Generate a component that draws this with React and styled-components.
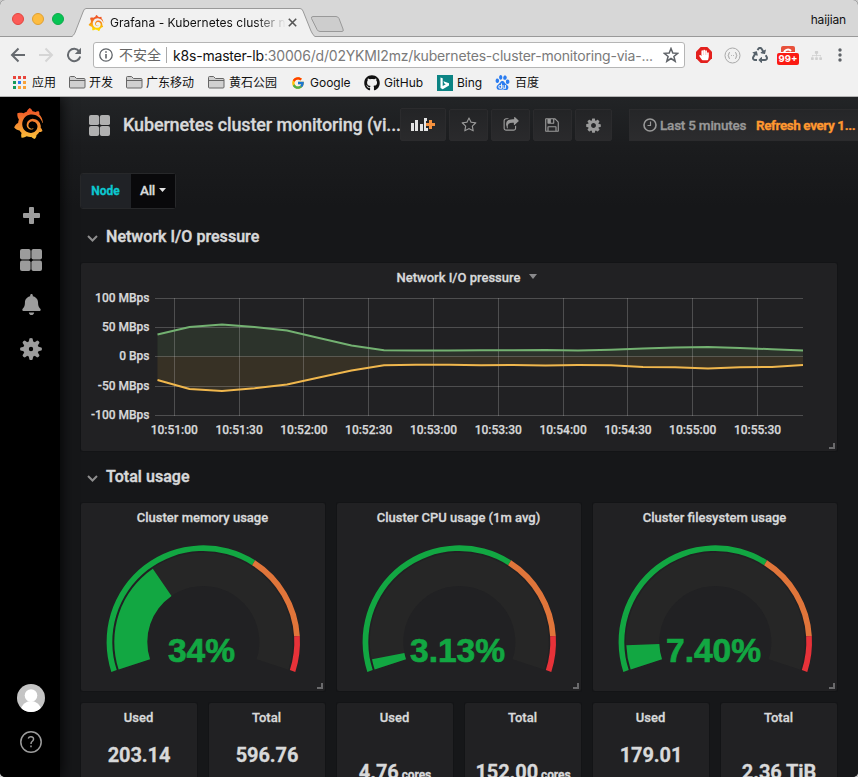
import React from "react";
import styled, { createGlobalStyle } from "styled-components";
import { FaGithub, FaRecycle, FaBell, FaHandPaper, FaSitemap } from "react-icons/fa";
import { SiGrafana, SiBaidu } from "react-icons/si";
import { FcGoogle } from "react-icons/fc";

const UI = `Inter, "Noto Sans CJK SC", sans-serif`;
const DASH = `Roboto, "Liberation Sans", sans-serif`;

const GlobalStyle = createGlobalStyle`
  * { box-sizing: border-box; }
  body { margin: 0; background: #c9c9c9; }
  svg { display: block; flex: none; }
`;

const Window = styled.div`
  width: 858px;
  height: 777px;
  display: flex;
  flex-direction: column;
  overflow: hidden;
  border-radius: 5px;
  background: #161719;
  font-family: ${UI};
`;

/* ---------- browser chrome ---------- */

const TabStrip = styled.div`
  height: 37px;
  flex: none;
  display: flex;
  align-items: flex-start;
  background: #d7d7d7;
  border-bottom: 1px solid #999;
`;
const Lights = styled.div`
  display: flex;
  gap: 8px;
  padding: 13px 0 0 12px;
  width: 72px;
`;
const Light = styled.i`
  width: 12px;
  height: 12px;
  border-radius: 50%;
  background: ${(p) => p.$color};
  border: 1px solid ${(p) => p.$edge};
`;
const Tab = styled.div`
  position: relative;
  width: 238px;
  height: 37px;
  display: flex;
  align-items: center;
  padding: 8px 0 0 16px;
`;
const TabShape = styled.svg`
  position: absolute;
  left: 0;
  top: 0;
`;
const TabText = styled.span`
  position: relative;
  margin-left: 6px;
  width: 176px;
  overflow: hidden;
  white-space: nowrap;
  font-size: 12px;
  letter-spacing: 0.03px;
  color: #111;
  mask-image: linear-gradient(90deg, #000 145px, transparent 176px);
`;
const Favicon = styled(SiGrafana)`
  position: relative;
  fill: url(#flameSmall);
`;
const CloseIcon = styled.svg`
  position: relative;
  margin-left: 2px;
`;
const NewTab = styled.svg`
  margin-top: 15px;
`;
const UserName = styled.span`
  margin: 12px 12px 0 auto;
  font-size: 12px;
  line-height: 16px;
  letter-spacing: -0.15px;
  color: #111;
`;

const Toolbar = styled.div`
  height: 36px;
  flex: none;
  display: flex;
  align-items: center;
  background: #f1f1f1;
  padding-left: 10px;
`;
const NavIcons = styled.div`
  display: flex;
  gap: 12px;
  width: 83px;
`;
const Omnibox = styled.div`
  width: 592px;
  height: 26px;
  display: flex;
  align-items: center;
  background: #fff;
  border: 1px solid #b5b5b5;
  border-radius: 3px;
  padding: 0 5px 0 5px;
  font-size: 14px;
`;
const Insecure = styled.span`
  margin-left: 6px;
  width: 48px;
  height: 16px;
  line-height: 16px;
  border-right: 1px solid #aaa;
  color: #666;
`;
const Url = styled.span`
  margin-left: 6px;
  flex: 1;
  white-space: nowrap;
  letter-spacing: ${(p) => p.$track};
  color: #7a7a7a;
  b { font-weight: 400; color: #111; }
`;
const Extensions = styled.div`
  display: flex;
  margin-left: 5px;
`;
const Extension = styled.div`
  width: ${(p) => p.$w || 28}px;
  height: 26px;
  display: flex;
  align-items: center;
  justify-content: center;
`;
const BadgeHost = styled.div`
  width: 22px;
  height: 20px;
  padding-top: 1px;
  display: flex;
  flex-direction: column;
  align-items: center;
`;
const BadgeTop = styled.div`
  width: 14px;
  height: 7px;
  overflow: hidden;
  border-radius: 2px 2px 0 0;
  background: #e8513c;
  border-bottom: 1px solid #fff;
`;
const Badge = styled.div`
  width: 22px;
  height: 12px;
  flex: none;
  border-radius: 2px;
  background: #fb1b13;
  color: #fff;
  font: 700 9.5px/12px Inter, sans-serif;
  text-align: center;
`;
const Bookmarks = styled.div`
  height: 24px;
  flex: none;
  display: flex;
  background: #f1f1f1;
  border-bottom: 1px solid #b4b4b4;
  padding-left: 13px;
`;
const Bookmark = styled.div`
  width: ${(p) => p.$w}px;
  display: flex;
  align-items: center;
  gap: ${(p) => p.$gap || 4}px;
  height: 19px;
  white-space: nowrap;
  font-size: 12px;
  line-height: 17px;
  color: #111;
`;

/* ---------- dashboard ---------- */

const Body = styled.div`
  flex: 1;
  min-height: 0;
  display: flex;
  overflow: hidden;
`;
const Side = styled.nav`
  width: 60px;
  flex: none;
  display: flex;
  flex-direction: column;
  align-items: center;
  background: #000;
  color: #9c9c9c;
  padding: 11px 0 24px;
  box-shadow: 0 0 14px #000;
  z-index: 1;
`;
const Logo = styled(SiGrafana)`
  fill: url(#flame);
  margin: 0 0 54px -4px;
`;
const SideItem = styled.div`
  height: 44.5px;
  display: flex;
  align-items: center;
  padding-left: 2px;
`;
const SideBottom = styled.div`
  margin-top: auto;
  padding-left: 2px;
  display: flex;
  flex-direction: column;
  align-items: center;
  gap: 19px;
`;
const Main = styled.main`
  flex: 1;
  min-width: 0;
  overflow: hidden;
  background: linear-gradient(180deg, #222426 0, #1b1c1e 50px, #161719 110px);
  font-family: ${DASH};
  color: #d8d9da;
  -webkit-text-stroke: 0.3px;
`;
const NavBar = styled.header`
  height: 55px;
  display: flex;
  padding: 11px 0 0 29px;
`;
const Title = styled.h1`
  width: 277px;
  margin: 4px 0 0 13px;
  font: 500 18px/26px ${DASH};
  letter-spacing: ${(p) => p.$track};
  white-space: nowrap;
`;
const NavButton = styled.button`
  width: ${(p) => p.$w}px;
  height: ${(p) => p.$h || 32}px;
  margin: ${(p) => (p.$h ? 0 : 1)}px 3px 0 0;
  padding: 0;
  display: flex;
  align-items: center;
  justify-content: center;
  border: 1px solid #2b2b2d;
  border-radius: 2px;
  background: linear-gradient(180deg, #232426, #2a2a2c);
  color: #9a9a9a;
`;
const TimePicker = styled.div`
  flex: 1;
  height: 32px;
  margin: 1px 0 0 14px;
  padding-left: 13px;
  display: flex;
  align-items: center;
  white-space: nowrap;
  border: 1px solid #2b2b2d;
  border-right: 0;
  background: linear-gradient(180deg, #252628, #2c2c2e);
  font-weight: 500;
  font-size: 13.5px;
  color: #999;
`;
const Range = styled.span`
  margin-left: 3px;
  width: 96px;
  letter-spacing: -0.22px;
`;
const Refresh = styled.span`
  color: #ff9830;
  font-weight: 700;
  letter-spacing: -0.42px;
`;
const Variables = styled.div`
  display: flex;
  margin: 21px 0 0 20px;
  height: 36px;
  width: 96px;
  font-weight: 500;
  border: 1px solid #27282a;
  border-radius: 3px;
`;
const VarLabel = styled.div`
  width: 50px;
  padding-right: 1px;
  line-height: 35px;
  text-align: center;
  background: #202226;
  color: #0cc8cf;
  font-size: 12px;
  font-weight: 700;
  border-radius: 2px 0 0 2px;
`;
const VarValue = styled.div`
  flex: 1;
  display: flex;
  align-items: center;
  justify-content: center;
  gap: 4px;
  padding-bottom: 2px;
  background: #09090b;
  font-size: 13.5px;
  letter-spacing: -0.2px;
`;
const RowTitle = styled.h2`
  height: ${(p) => p.$h}px;
  margin: 0;
  padding: ${(p) => p.$drop || 0}px 0 0 27px;
  display: flex;
  align-items: center;
  gap: 8px;
  font: 500 16px/20px ${DASH};
  letter-spacing: 0.04px;
  -webkit-text-stroke: 0.45px;
`;
const Panel = styled.section`
  position: relative;
  height: ${(p) => p.$h}px;
  overflow: hidden;
  background: #212123;
  border-radius: 2px;
  box-shadow: 0 0 0 1px #131416;
`;
const PanelTitle = styled.div`
  height: 28px;
  padding-right: 1px;
  display: flex;
  justify-content: center;
  align-items: center;
  font-weight: 500;
  font-size: 13px;
`;
const Caret = styled.i`
  margin: -2px -17px 0 9px;
  border: 4px solid transparent;
  border-top: 5px solid #8a8a8c;
  border-bottom: 0;
`;
const Resize = styled.i`
  position: absolute;
  right: 2px;
  bottom: 2px;
  width: 6px;
  height: 6px;
  border-right: 2px solid #6a6a6c;
  border-bottom: 2px solid #6a6a6c;
`;
const NetworkWrap = styled.div`
  margin: 0 21px;
`;
const ChartSvg = styled.svg`
  margin-top: -28px;
  font: 500 12px ${DASH};
  fill: #d8d9da;
  text { stroke: #d8d9da; stroke-width: 0.25px; }
`;
const GaugeGrid = styled.div`
  display: grid;
  grid-template-columns: repeat(3, 244px);
  gap: 12px;
  margin: 0 21px;
`;
const StatGrid = styled.div`
  display: grid;
  grid-template-columns: repeat(6, 116px);
  gap: 12px;
  margin: 12px 21px 0;
`;
const GaugeSvg = styled.svg`
  margin-top: -28px;
  text {
    font: 700 33.5px "Liberation Sans", Arial, sans-serif;
    fill: #12a742;
    stroke: #12a742;
    stroke-width: 0.7px;
  }
`;
const Stat = styled.div`
  margin-top: ${(p) => (p.$low ? 29 : 12)}px;
  text-align: center;
  white-space: nowrap;
  font-weight: 700;
  font-size: 20px;
  line-height: 24px;
  letter-spacing: -0.1px;
  small { font-size: 12px; margin-left: 3px; }
`;

/* ---------- icons ---------- */

const FA = {
  star: "M1201 1004l306-297-422-62-189-382-189 382-422 62 306 297-73 421 378-199 377 199zm527-357q0 22-26 48l-363 354 86 500q1 7 1 20 0 50-41 50-19 0-40-12l-449-236-449 236q-22 12-40 12-21 0-31.5-14.5t-10.5-35.5q0-6 2-20l86-500-364-354q-25-27-25-48 0-37 56-46l502-73 225-455q19-41 49-41t49 41l225 455 502 73q56 9 56 46z",
  share: "M1472 989v259q0 119-84.500 203.500T1184 1536H352q-119 0-203.500-84.500T64 1248V416q0-119 84.500-203.500T352 128h255q13 0 22.500 9.500T639 160q0 27-26 32-77 26-133 60-10 4-16 4H352q-66 0-113 47t-47 113v832q0 66 47 113t113 47h832q66 0 113-47t47-113v-214q0-19 18-29 28-13 54-37 16-16 35-8 21 9 21 29zm237-496l-384 384q-18 19-45 19-12 0-25-5-39-17-39-59V640h-160q-323 0-438 131-119 137-74 473 3 23-20 34-8 2-12 2-16 0-26-13-10-14-21-31t-39.500-68.500T409 1068t-38.500-114T353 832q0-49 3.500-91t14-90 28-88 47-81.500 68.500-74 94.500-61.500 124.500-48.500 159.500-30.500 196.500-11h160V64q0-42 39-59 13-5 25-5 26 0 45 19l384 384q19 19 19 45t-19 45z",
  save: "M512 1536h768v-384H512v384zm896 0h128V640q0-14-10-38.500t-20-34.500l-281-281q-10-10-34-20t-39-10v416q0 40-28 68t-68 28H480q-40 0-68-28t-28-68V256H256v1280h128v-416q0-40 28-68t68-28h832q40 0 68 28t28 68v416zM1024 608V288q0-13-9.500-22.500T992 256H800q-13 0-22.500 9.500T768 288v320q0 13 9.500 22.500T800 640h192q13 0 22.500-9.500t9.500-22.500zm640 32v928q0 40-28 68t-68 28H224q-40 0-68-28t-28-68V224q0-40 28-68t68-28h928q40 0 88 20t76 48l280 280q28 28 48 76t20 88z",
  cog: "M1152 896q0-106-75-181t-181-75-181 75-75 181 75 181 181 75 181-75 75-181zm512-109v222q0 12-8 23t-20 13l-185 28q-19 54-39 91 35 50 107 138 10 12 10 25t-9 23q-27 37-99 108t-94 71q-12 0-26-9l-138-108q-44 23-91 38-16 136-29 186-7 28-36 28H785q-14 0-24.500-8.500t-11.500-21.500l-28-184q-49-16-90-37l-141 107q-10 9-25 9-14 0-25-11-126-114-165-168-7-10-7-23 0-12 8-23 15-21 51-66.500t54-70.500q-27-50-41-99l-183-27q-13-2-21-12.500t-8-23.500V783q0-12 8-23t19-13l186-28q14-46 39-92-40-57-107-138-10-12-10-24 0-10 9-23 26-36 98.500-107.500T465 286q13 0 26 10l138 107q44-23 91-38 16-136 29-186 7-28 36-28h222q14 0 24.500 8.500T1043 181l28 184q49 16 90 37l142-107q9-9 24-9 13 0 25 10 129 119 165 170 7 8 7 22 0 12-8 23-15 21-51 66.500t-54 70.500q26 50 41 98l183 28q13 2 21 12.500t8 23.500z",
};
const FaIcon = ({ name, size = 16 }) => (
  <svg width={size} height={size} viewBox="0 0 1792 1792" fill="currentColor">
    <path d={FA[name]} />
  </svg>
);
const Squares = ({ size, color }) => (
  <svg width={size} height={size} viewBox="0 0 22 22" fill={color}>
    <rect width="10.6" height="10.6" rx="2" />
    <rect x="11.4" width="10.6" height="10.6" rx="2" />
    <rect y="11.4" width="10.6" height="10.6" rx="2" />
    <rect x="11.4" y="11.4" width="10.6" height="10.6" rx="2" />
  </svg>
);
/* Eight-toothed cog with a small hub, as used in the side menu. */
const MenuCog = () => (
  <svg width="22" height="22" viewBox="-11 -11 22 22" fill="#9c9c9c">
    <path fillRule="evenodd" d="M-7.800 0a7.800 7.800 0 1 0 15.600 0a7.800 7.800 0 1 0-15.600 0ZM-2.200 0a2.200 2.200 0 1 1 4.400 0a2.200 2.200 0 1 1-4.400 0Z" />
    {[0, 45, 90, 135, 180, 225, 270, 315].map((a) => (
      <path key={a} d="M-2.300-7 -1.600-10.400Q0-11.500 1.600-10.400L2.300-7Z" transform={`rotate(${a})`} />
    ))}
  </svg>
);
const Chevron = () => (
  <svg width="11" height="8" viewBox="0 0 11 8" fill="none" stroke="#8e8e8e" strokeWidth="2" transform="translate(0 1.500)">
    <path d="M1 1.500 5.500 6 10 1.500" />
  </svg>
);
const Folder = () => (
  <svg width="17" height="13" viewBox="0 0 17 13" fill="#d0d0d0" stroke="#666">
    <path d="M.5 11V1.500q0-1 1-1h4l2 2h7.500q1 0 1 1V11q0 1-1 1H1.500q-1 0-1-1z" />
    <path d="M.5 4.500h15.500" />
  </svg>
);
const Gradients = () => (
  <svg width="0" height="0">
    <linearGradient id="flame" x1="0" y1="0" x2="0" y2="1">
      <stop offset="0.1" stopColor="#f05a28" />
      <stop offset="1" stopColor="#fbc13a" />
    </linearGradient>
    <linearGradient id="flameSmall" x1="0" y1="0" x2="0" y2="1">
      <stop offset="0.2" stopColor="#f05a28" />
      <stop offset="0.9" stopColor="#ffdc00" />
    </linearGradient>
  </svg>
);

/* ---------- network chart ---------- */

const STEP = [76.5, 108.5, 141, 173.5, 206, 238, 270.5, 303, 335, 368, 400, 432, 464.5, 497, 530, 562, 594, 627, 659, 691, 722];
const RX = [71.5, 64, 61.5, 64, 67.5, 75, 82.5, 87.2, 87.4, 87.4, 87.2, 87.2, 86.9, 87.4, 86.7, 85.5, 84.5, 83.9, 85, 86.2, 87.4];
const TX = [117, 126, 128, 125.3, 121.5, 114.5, 107.5, 102.3, 101.7, 101.7, 102.2, 102, 102.4, 102, 102.3, 103.9, 104.3, 105.5, 104.2, 104, 102];
const X_TICKS = [93.5, 158.5, 222.5, 287.5, 352.5, 417.5, 482.5, 546.5, 611.5, 676.5];
const X_LABELS = ["10:51:00", "10:51:30", "10:52:00", "10:52:30", "10:53:00", "10:53:30", "10:54:00", "10:54:30", "10:55:00", "10:55:30"];
const Y_TICKS = [35.5, 64.5, 93.5, 123.5, 152.5];
const Y_LABELS = ["100 MBps", "50 MBps", "0 Bps", "-50 MBps", "-100 MBps"];
const points = (ys) => STEP.map((x, i) => `${x},${ys[i]}`).join(" ");

const NetworkChart = () => (
  <ChartSvg width="756" height="188" viewBox="0 0 756 188">
    <polygon points={`76.5,93.5 ${points(RX)} 722,93.5`} fill="#7eb26d" fillOpacity="0.12" />
    <polygon points={`76.5,93.5 ${points(TX)} 722,93.5`} fill="#eab839" fillOpacity="0.11" />
    <g stroke="#c8c8c8" strokeOpacity="0.27">
      {Y_TICKS.map((y) => <line key={y} x1="74" x2="722" y1={y} y2={y} />)}
      {X_TICKS.map((x) => <line key={x} x1={x} x2={x} y1="35" y2="153" />)}
    </g>
    <polyline points={points(RX)} fill="none" stroke="#73b171" strokeWidth="2" />
    <polyline points={points(TX)} fill="none" stroke="#f0b74d" strokeWidth="2" />
    {Y_LABELS.map((t, i) => <text key={t} x="68.500" y={Y_TICKS[i] + 3.5} textAnchor="end">{t}</text>)}
    {X_LABELS.map((t, i) => <text key={t} x={93.3 + i * 64.8} y="171" textAnchor="middle">{t}</text>)}
  </ChartSvg>
);

/* ---------- gauges ---------- */

const CX = 122.3;
const CY = 139;
const at = (r, f) => {
  const a = ((198 - 216 * f) * Math.PI) / 180;
  return `${(CX + r * Math.cos(a)).toFixed(2)} ${(CY - r * Math.sin(a)).toFixed(2)}`;
};
const band = (ro, ri, from, to) => {
  const large = (to - from) * 216 > 180 ? 1 : 0;
  return `M${at(ro, from)}A${ro} ${ro} 0 ${large} 1 ${at(ro, to)}L${at(ri, to)}A${ri} ${ri} 0 ${large} 0 ${at(ri, from)}Z`;
};
const Gauge = ({ title, value, label }) => (
  <Panel $h={188}>
    <PanelTitle>{title}</PanelTitle>
    <GaugeSvg width="244" height="188" viewBox="0 0 244 188">
      <path d={band(89.5, 56, 0, 1)} fill="#262626" />
      <path d={band(89, 56, 0, value)} fill="#12a742" />
      <path d={band(96.7, 91, 0, 0.65)} fill="#12a742" />
      <path d={band(96.7, 91, 0.65, 0.9)} fill="#e0753a" />
      <path d={band(96.7, 91, 0.9, 1)} fill="#e73239" />
      <text x="120.5" y="159" textAnchor="middle">{label}</text>
    </GaugeSvg>
    <Resize />
  </Panel>
);

const STATS = [
  ["Used", "203.14"],
  ["Total", "596.76"],
  ["Used", "4.76", "cores"],
  ["Total", "152.00", "cores"],
  ["Used", "179.01"],
  ["Total", "2.36 TiB", ""],
];

export default function App() {
  return (
    <Window>
      <GlobalStyle />
      <TabStrip>
        <Lights>
          <Light $color="#fc5b57" $edge="#e2463f" />
          <Light $color="#fdbc40" $edge="#dfa032" />
          <Light $color="#06c454" $edge="#0fa94a" />
        </Lights>
        <Tab>
          <TabShape width="244" height="37" viewBox="0 0 244 37">
            <path d="M0 36.5C2 35 3 33 4 30L11 12Q12 8.500 14 8.500H228Q230 8.500 231 11L239 31Q241 35.500 243 36.500V37H0Z" fill="#f1f1f1" />
            <path d="M0 36.5C2 35 3 33 4 30L11 12Q12 8.500 14 8.500H228Q230 8.500 231 11L239 31Q241 35.500 243 36.500" fill="none" stroke="#999" />
          </TabShape>
          <Favicon size={16} />
          <TabText>Grafana - Kubernetes cluster n</TabText>
          <CloseIcon width="9" height="9" viewBox="0 0 9 9" stroke="#555" strokeWidth="1.600">
            <path d="M.8.8 8.200 8.200M8.200.8.8 8.200" />
          </CloseIcon>
        </Tab>
        <NewTab width="36" height="18" viewBox="0 0 36 18">
          <path d="M3 1.500H26Q28 1.500 29 3.500L33 14Q34 16.500 32 16.500H10Q8 16.500 7 14.500L1.500 3.500Q1 1.500 3 1.500Z" fill="#cdcdcd" stroke="#999" />
        </NewTab>
        <UserName>haijian</UserName>
      </TabStrip>

      <Toolbar>
        <NavIcons>
          <svg width="16" height="16" viewBox="0 0 16 16" fill="none" stroke="#666a6f" strokeWidth="2"><path d="M15 8H2M8.500 1.500 2 8l6.500 6.500" /></svg>
          <svg width="16" height="16" viewBox="0 0 16 16" fill="none" stroke="#d5d5d5" strokeWidth="2"><path d="M1 8h13M7.500 1.500 14 8l-6.500 6.500" /></svg>
          <svg width="16" height="16" viewBox="0 0 16 16" fill="none" stroke="#666a6f" strokeWidth="2"><path d="M13.300 4.500A6.200 6.200 0 1 0 14.200 9.500" /><path d="M15 .8V7H8.800Z" fill="#666a6f" stroke="none" /></svg>
        </NavIcons>
        <Omnibox>
          <svg width="14" height="14" viewBox="0 0 14 14" fill="none" stroke="#5f6368" strokeWidth="1.300"><circle cx="7" cy="7" r="6.200" /><path d="M7 6v4.500M7 3.200v1.500" strokeWidth="1.600" /></svg>
          <Insecure>不安全</Insecure>
          <Url $track="-0.19px"><b>k8s-master-lb</b>:30006/d/02YKMI2mz/kubernetes-cluster-monitoring-via-...</Url>
          <svg width="16" height="16" viewBox="0 0 16 16" fill="none" stroke="#5f6368" strokeWidth="1.500"><path d="M8 1.500 9.800 6l4.900.3-3.800 3.100 1.300 4.800L8 11.500l-4.200 2.700 1.300-4.800L1.300 6.300 6.200 6Z" /></svg>
        </Omnibox>
        <Extensions>
          <Extension>
            <svg width="16" height="16" viewBox="0 0 16 16"><path d="M4.700 0h6.600L16 4.700v6.600L11.300 16H4.700L0 11.300V4.700Z" fill="#e3201d" /><FaHandPaper x="2.500" y="2.500" size={11} color="#fff" /></svg>
          </Extension>
          <Extension>
            <svg width="17" height="17" viewBox="0 0 17 17" fill="none" stroke="#a9a9a9"><circle cx="8.500" cy="8.500" r="7.500" /><path d="M6 5.500q-1.500 0-1.200 1.500.1 1.500-1 1.500 1.100 0 1 1.500-.3 1.500 1.200 1.500M11 5.500q1.500 0 1.200 1.500-.1 1.500 1 1.500-1.100 0-1 1.500.3 1.500-1.200 1.500M7 8.500h.8M9.200 8.500h.8" /></svg>
          </Extension>
          <Extension><FaRecycle size={16} color="#56616a" /></Extension>
          <Extension>
            <BadgeHost>
              <BadgeTop><svg width="14" height="7" viewBox="0 0 14 7" fill="none" stroke="#fff" strokeWidth="2"><path d="M3 8a4 4 0 0 1 7-3" /></svg></BadgeTop>
              <Badge>99+</Badge>
            </BadgeHost>
          </Extension>
          <Extension><FaSitemap size={11} color="#d0d0d0" /></Extension>
          <Extension $w={20}>
            <svg width="4" height="14" viewBox="0 0 4 14" fill="#5f6368"><circle cx="2" cy="2" r="1.700" /><circle cx="2" cy="7" r="1.700" /><circle cx="2" cy="12" r="1.700" /></svg>
          </Extension>
        </Extensions>
      </Toolbar>

      <Bookmarks>
        <Bookmark $w={56} $gap={6}>
          <svg width="13" height="13" viewBox="0 0 13 13">
            {["#e8453c", "#e8453c", "#e8453c", "#159a5b", "#2f7cf6", "#f9a23a", "#159a5b", "#f9a23a", "#f9a23a"].map((c, i) => (
              <rect key={i} x={(i % 3) * 5} y={Math.floor(i / 3) * 5} width="3" height="3" fill={c} />
            ))}
          </svg>
          应用
        </Bookmark>
        <Bookmark $w={57} $gap={3}><Folder />开发</Bookmark>
        <Bookmark $w={82} $gap={3}><Folder />广东移动</Bookmark>
        <Bookmark $w={83}><Folder />黄石公园</Bookmark>
        <Bookmark $w={73} $gap={5}><FcGoogle size={14} />Google</Bookmark>
        <Bookmark $w={73}><FaGithub size={16} />GitHub</Bookmark>
        <Bookmark $w={58}>
          <svg width="16" height="16" viewBox="0 0 16 16"><rect width="16" height="16" fill="#0c8484" /><path d="M3.500 2.500 5.700 3.300V11L8.800 9.200 7.300 8.500 6.400 6.200 12 8.200V10.600L5.700 14.200 3.500 12.900Z" fill="#fff" /></svg>
          Bing
        </Bookmark>
        <Bookmark $w={60} $gap={5}><SiBaidu size={15} color="#2a7cf0" />百度</Bookmark>
      </Bookmarks>

      <Body>
        <Side>
          <Logo size={31} />
          <SideItem><svg width="17" height="17" viewBox="0 0 17 17" fill="#9c9c9c"><rect x="6" width="5" height="17" rx="1" /><rect y="6" width="17" height="5" rx="1" /></svg></SideItem>
          <SideItem><Squares size={22} color="#9c9c9c" /></SideItem>
          <SideItem><FaBell size={21} /></SideItem>
          <SideItem><MenuCog /></SideItem>
          <SideBottom>
            <svg width="28" height="28" viewBox="0 0 28 28">
              <clipPath id="avatar"><circle cx="14" cy="14" r="14" /></clipPath>
              <g clipPath="url(#avatar)"><rect width="28" height="28" fill="#c4c4c4" /><circle cx="14" cy="11.500" r="6.300" fill="#fff" /><ellipse cx="14" cy="26" rx="10" ry="9" fill="#fff" /></g>
            </svg>
            <svg width="22" height="22" viewBox="0 0 22 22" fill="none" stroke="#9c9c9c" strokeWidth="1.500"><circle cx="11" cy="11" r="10.200" /><path d="M8.200 7.500Q9 5.600 11 5.700 13.800 6 13.500 8.300 13.200 9.700 12 10.500 11 11.200 11 13M11 14.500v1.700" /></svg>
          </SideBottom>
          <Gradients />
        </Side>

        <Main>
          <NavBar>
            <svg width="21" height="28" viewBox="0 0 21 28"><g transform="translate(0 7)"><Squares size={21} color="#b0b0b0" /></g></svg>
            <Title $track="-0.14px">Kubernetes cluster monitoring (vi...</Title>
            <NavButton $w={46} $h={33}>
              <svg width="24" height="14" viewBox="0 0 24 14" fill="#e3e3e3"><path d="M0 5h3v8H0zM4 2h3v11H4zM9 6h3v7H9zM13 0h3v3h-1v7h2v3h-4z" /><path d="M18 2h3v3h3v3h-3v3h-3V8h-3V5h3z" fill="#f5913e" /></svg>
            </NavButton>
            <NavButton $w={39}><FaIcon name="star" /></NavButton>
            <NavButton $w={39}><FaIcon name="share" /></NavButton>
            <NavButton $w={38.5}><FaIcon name="save" /></NavButton>
            <NavButton $w={37.5}><FaIcon name="cog" size={17} /></NavButton>
            <TimePicker>
              <svg width="14" height="14" viewBox="0 0 14 14" fill="none" stroke="#999" strokeWidth="1.600"><circle cx="7" cy="7" r="6" /><path d="M7.500 3.500v4H4.500" strokeWidth="1.200" /></svg>
              <Range>Last 5 minutes</Range>
              <Refresh>Refresh every 1...</Refresh>
            </TimePicker>
          </NavBar>

          <Variables>
            <VarLabel>Node</VarLabel>
            <VarValue>All<svg width="7" height="4" viewBox="0 0 7 4" fill="#e3e3e3"><path d="M0 0h7L3.500 4z" /></svg></VarValue>
          </Variables>

          <RowTitle $h={54} $drop={2}><Chevron />Network I/O pressure</RowTitle>
          <NetworkWrap>
            <Panel $h={188}>
              <PanelTitle>Network I/O pressure<Caret /></PanelTitle>
              <NetworkChart />
              <Resize />
            </Panel>
          </NetworkWrap>

          <RowTitle $h={52}><Chevron />Total usage</RowTitle>
          <GaugeGrid>
            <Gauge title="Cluster memory usage" value={0.34} label="34%" />
            <Gauge title="Cluster CPU usage (1m avg)" value={0.0313} label="3.13%" />
            <Gauge title="Cluster filesystem usage" value={0.074} label="7.40%" />
          </GaugeGrid>
          <StatGrid>
            {STATS.map(([title, value, unit], i) => (
              <Panel key={i} $h={92}>
                <PanelTitle>{title}</PanelTitle>
                <Stat $low={unit !== undefined}>{value}{unit && <small>{unit}</small>}</Stat>
              </Panel>
            ))}
          </StatGrid>
        </Main>
      </Body>
    </Window>
  );
}
